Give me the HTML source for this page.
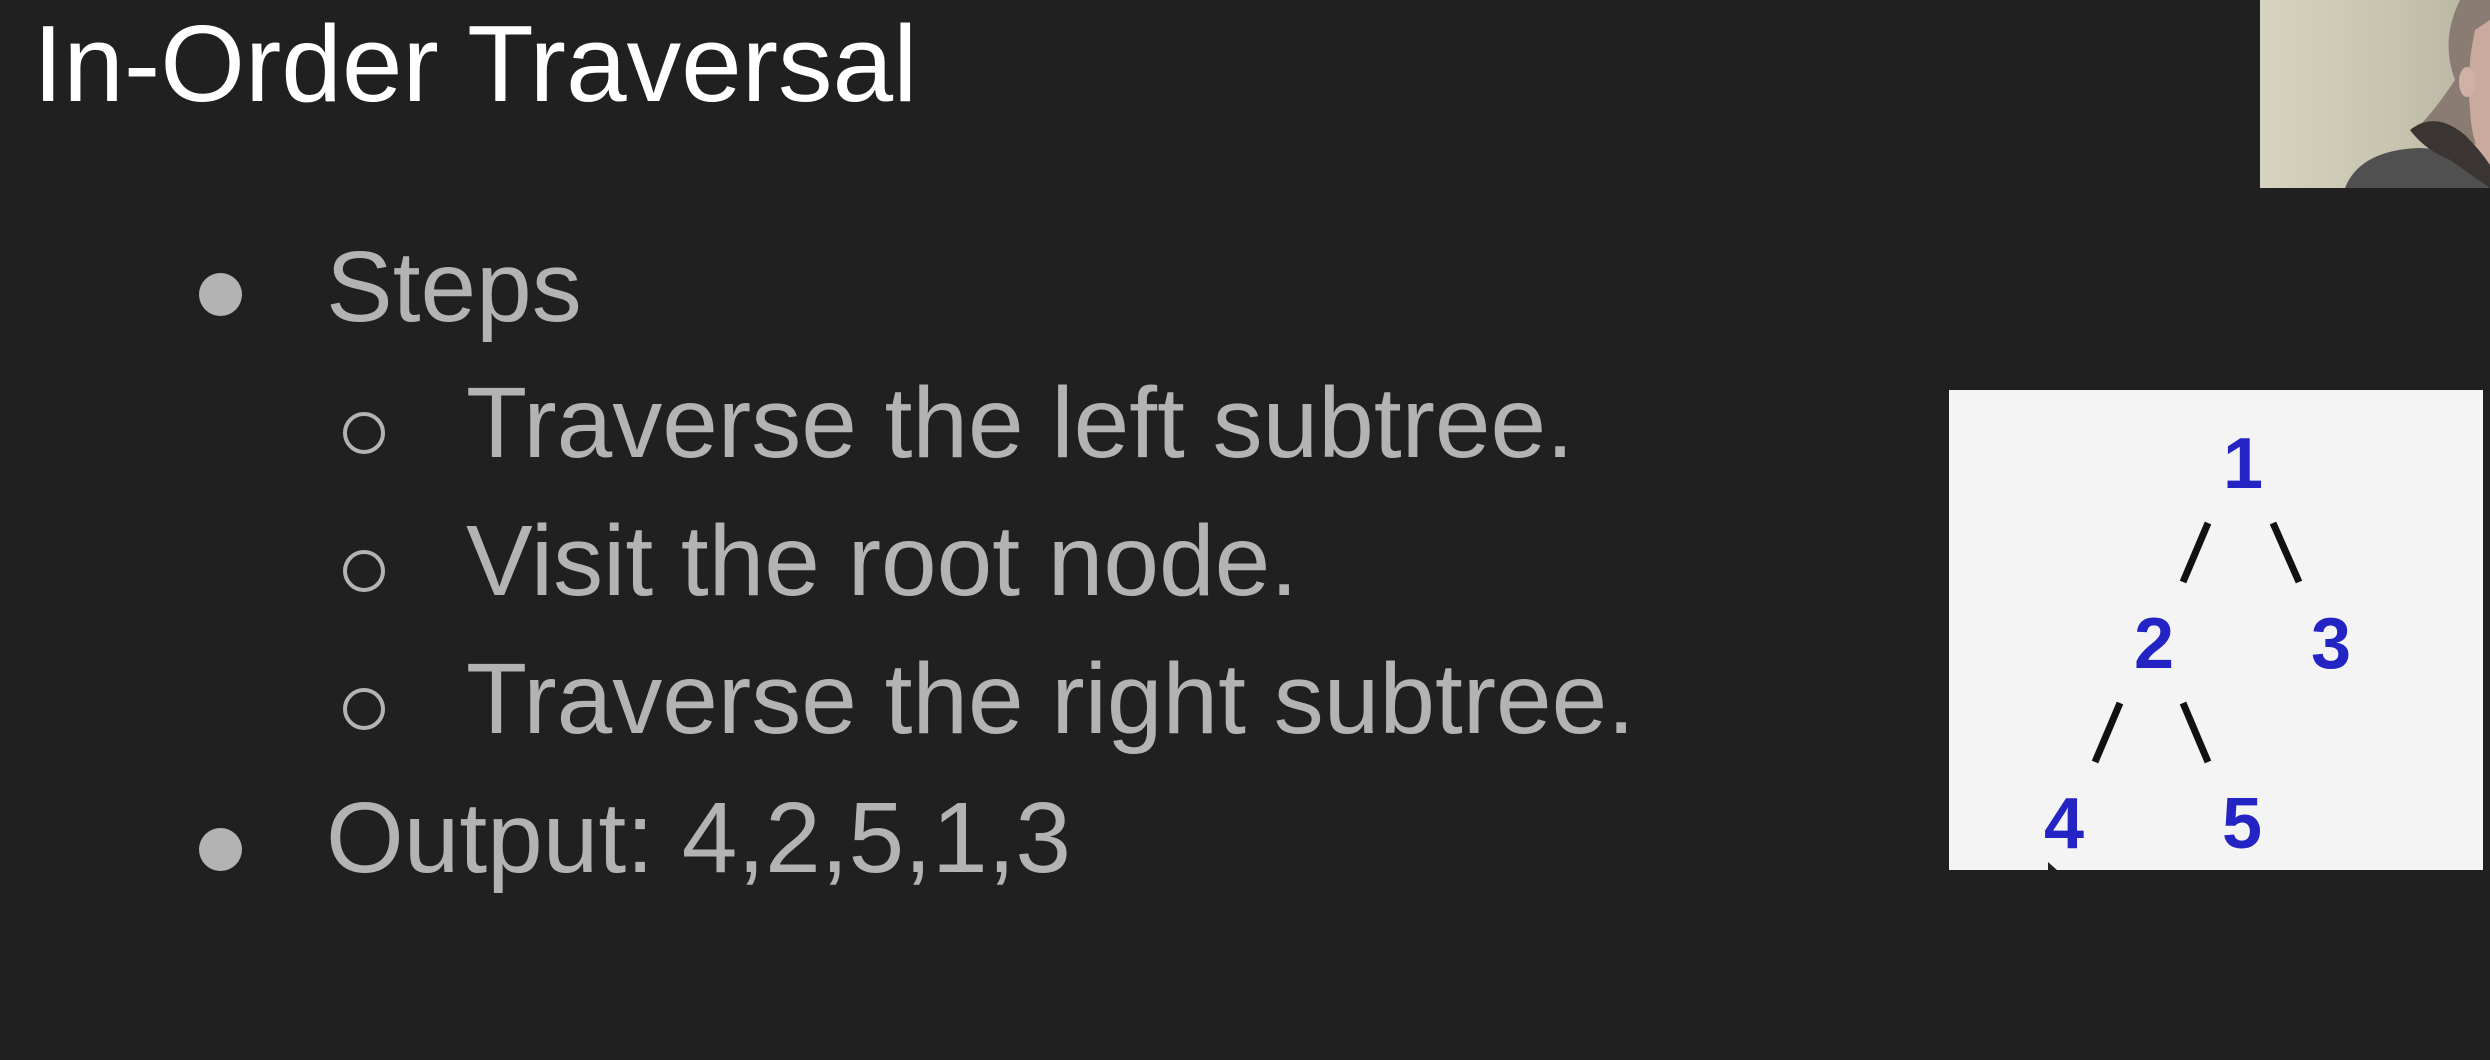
<!DOCTYPE html>
<html><head><meta charset="utf-8"><style>
html,body{margin:0;padding:0}
body{width:2490px;height:1060px;background:#202020;position:relative;overflow:hidden;font-family:"Liberation Sans",Arial,sans-serif}
.t{position:absolute;white-space:nowrap;line-height:1}
.title{left:33px;font-size:109px;color:#ffffff}
.item{font-size:100px;color:#b3b3b3}
.dot{position:absolute;width:43px;height:43px;border-radius:50%;background:#b3b3b3}
.ring{position:absolute;width:42px;height:42px;border-radius:50%;border:4px solid #b3b3b3;box-sizing:border-box}
.box{position:absolute;left:1949px;top:390px;width:534px;height:480px;background:#f4f4f4}
.cam{position:absolute;left:2260px;top:0;width:230px;height:188px;overflow:hidden}
</style></head><body>
<div class="t title" style="top:10px">In-Order Traversal</div>

<div class="dot" style="left:199px;top:273px"></div>
<div class="t item" style="left:326px;top:237px">Steps</div>

<div class="ring" style="left:343px;top:412px"></div>
<div class="t item" style="left:466px;top:373px">Traverse the left subtree.</div>

<div class="ring" style="left:343px;top:550px"></div>
<div class="t item" style="left:466px;top:511px">Visit the root node.</div>

<div class="ring" style="left:343px;top:688px"></div>
<div class="t item" style="left:466px;top:649px">Traverse the right subtree.</div>

<div class="dot" style="left:199px;top:828px"></div>
<div class="t item" style="left:326px;top:788px">Output: 4,2,5,1,3</div>

<div class="box">
<svg width="534" height="480" viewBox="1949 390 534 480" xmlns="http://www.w3.org/2000/svg">
<g font-family="Liberation Sans, Arial, sans-serif" font-size="72" font-weight="bold" fill="#2424c4" text-anchor="middle">
<text x="2243" y="488">1</text>
<text x="2154" y="668">2</text>
<text x="2331" y="668">3</text>
<text x="2064" y="848">4</text>
<text x="2242" y="848">5</text>
</g>
<g stroke="#111" stroke-width="7" stroke-linecap="butt">
<line x1="2208" y1="523" x2="2183" y2="582"/>
<line x1="2273" y1="523" x2="2299" y2="582"/>
<line x1="2120" y1="703" x2="2095" y2="762"/>
<line x1="2183" y1="703" x2="2208" y2="762"/>
</g>
<path d="M2048 862 l0 12 l3 -3 l2 5 l2 -1 l-2 -5 l4 0 z" fill="#222"/>
</svg>
</div>

<div class="cam">
<svg width="230" height="188" viewBox="0 0 230 188" xmlns="http://www.w3.org/2000/svg">
<defs><linearGradient id="g" x1="0" x2="1"><stop offset="0" stop-color="#d6d4bf"/><stop offset="0.6" stop-color="#c6c3ae"/><stop offset="1" stop-color="#b5b2a0"/></linearGradient></defs>
<rect width="230" height="188" fill="url(#g)"/>
<path d="M200 0 Q180 40 195 80 Q175 110 160 125 L230 150 L230 0 Z" fill="#8a7c72"/>
<path d="M215 30 Q230 20 230 20 L230 170 Q212 150 210 110 Q206 70 215 30 Z" fill="#c9aa9c"/>
<ellipse cx="207" cy="82" rx="8" ry="15" fill="#cfb2a4"/>
<path d="M85 188 Q100 150 160 148 Q205 150 230 165 L230 188 Z" fill="#505050"/>
<path d="M150 130 Q175 110 205 135 Q220 150 230 165 L230 188 L190 160 Q165 150 150 130 Z" fill="#3a3533"/>
</svg>
</div>
</body></html>
